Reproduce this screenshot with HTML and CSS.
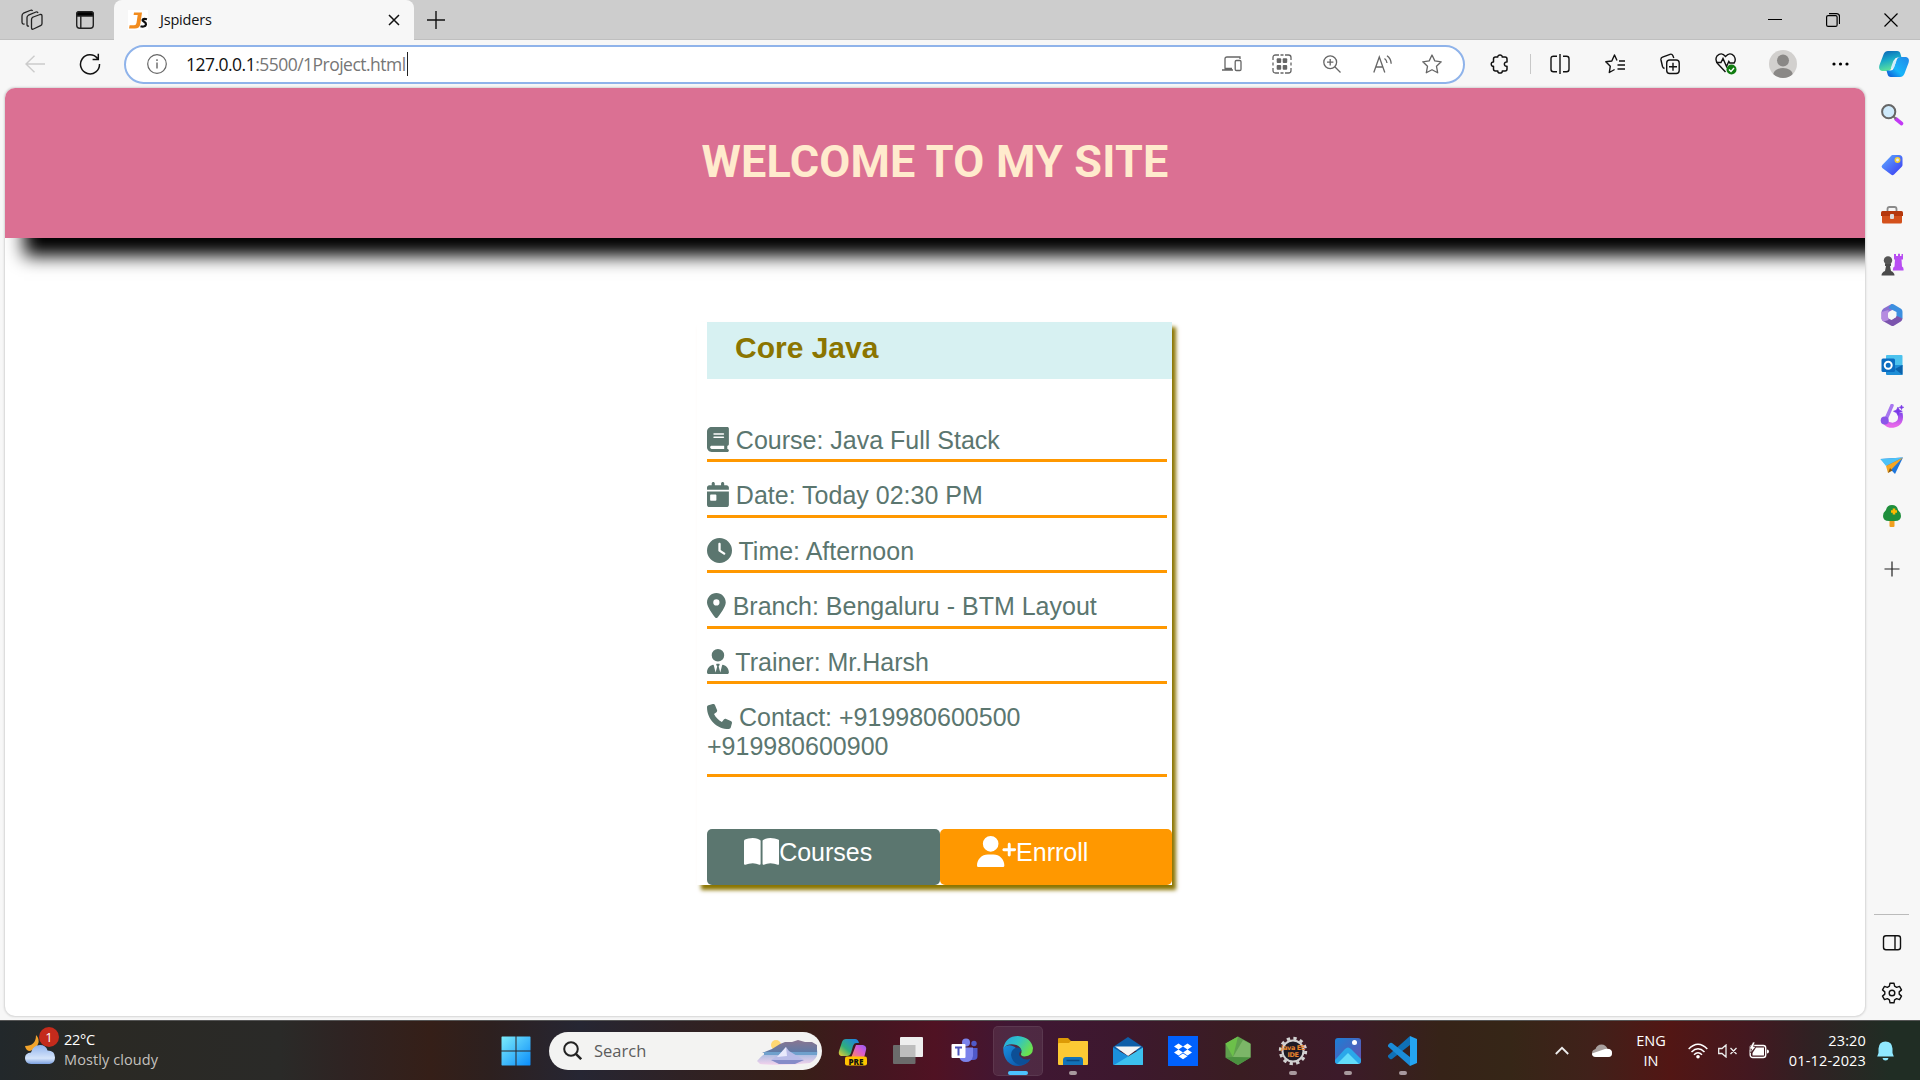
FILE: index.html
```html
<!DOCTYPE html>
<html lang="en">
<head>
<meta charset="utf-8">
<title>Jspiders</title>
<link rel="stylesheet" href="styles.css">
</head>
<body>
<div class="screen">
  <div class="tabbar">
    <div class="tab-tools">
      <svg width="22" height="22" viewBox="0 0 22 22" fill="none" stroke="#222" stroke-width="1.3"><path d="M11 8.500l8-3q2-.5 2 1.500v7.500q0 1.500-1.500 2.200l-7 3.300q-2 .8-2-1.200v-8q0-1.700 1-2.300z"/><path d="M8 17q-2 .5-2-1.500V8.500q0-1.500 1.500-2.300L15 3q1.500-.5 2 1"/><path d="M3.500 15Q1 15.500 1 13V7q0-2 1.500-2.800L9 1.500q2-.8 2.500.5"/></svg>
      <svg width="20" height="20" viewBox="0 0 20 20" fill="none" stroke="#222" stroke-width="1.4"><rect x="1.700" y="1.700" width="16.600" height="16.600" rx="3"/><path d="M1.700 6V4q0-2.300 2.300-2.300h12q2.300 0 2.300 2.300v2z" fill="#000"/><path d="M5.800 6v12"/></svg>
    </div>
    <div class="tab">
      <svg class="favicon" width="20" height="20" viewBox="0 0 20 20"><rect width="20" height="20" fill="#fff"/><path d="M6 2.500h8L12.300 14q-.6 4.500-5.500 4.500H1l.6-3.200h4.500q2 0 2.400-2.300L9.700 5H5.600z" fill="#f28c1e"/><path d="M19 9.200q-4-1-4.500.8c-.3 1.500 4 1.800 3.500 4.500-.5 2.500-4 2.200-5.500 1.700" fill="none" stroke="#111" stroke-width="2.200"/></svg>
      <span class="tab-title">Jspiders</span>
      <svg width="12" height="12" viewBox="0 0 12 12" stroke="#111" stroke-width="1.500"><path d="M1 1l10 10M11 1L1 11"/></svg>
    </div>
    <svg class="newtab" width="18" height="18" viewBox="0 0 18 18" stroke="#111" stroke-width="1.400"><path d="M9 0v18M0 9h18"/></svg>
    <div class="wincontrols">
      <svg width="14" height="14" viewBox="0 0 14 14"><path d="M0 6.500h14" stroke="#000"/></svg>
      <svg width="14" height="14" viewBox="0 0 14 14" fill="none" stroke="#000" stroke-width="1.200"><rect x=".6" y="2.600" width="10.500" height="10.800" rx="1.500"/><path d="M3 .6h7.500q3 0 3 3V11"/></svg>
      <svg width="14" height="14" viewBox="0 0 14 14" stroke="#000" stroke-width="1.200"><path d="M.5 .5l13 13M13.500 .5l-13 13"/></svg>
    </div>
  </div>

  <div class="toolbar">
    <svg width="20" height="18" viewBox="0 0 20 18" fill="none" stroke="#ccc" stroke-width="1.400"><path d="M20 9H1M9.500 .7L1 9l8.500 8.300"/></svg>
    <div class="refresh"><svg width="22" height="22" viewBox="0 0 22 22" fill="none" stroke="#111" stroke-width="1.500"><path d="M20.500 11A9.500 9.500 0 1 1 18.500 5.500M19.300 .8v5.700h-5.700"/></svg></div>
    <div class="address">
      <svg width="20" height="20" viewBox="0 0 20 20" fill="none" stroke="#666" stroke-width="1.200"><circle cx="10" cy="10" r="9.300"/><path d="M10 8.500v6M10 5.300v1.600" stroke-width="1.400"/></svg>
      <span class="url"><b>127.0.0.1</b>:5500/1Project.html</span><span class="caret"></span>
      <div class="address-icons">
        <svg width="20" height="16" viewBox="0 0 20 16" fill="none" stroke="#666" stroke-width="1.300"><path d="M3 12.500V3q0-2 2-2h13v2M0 14h11M2.500 12.500H10"/><rect x="13.200" y="4.500" width="5.800" height="10" rx="1.200"/></svg>
        <svg width="20" height="20" viewBox="0 0 20 20" fill="none" stroke="#666" stroke-width="1.300"><path d="M1 6V3.500Q1 1 3.500 1H7M13 1h3.500Q19 1 19 3.500V6M19 14v2.500q0 2.500-2.500 2.500H13M7 19H3.500Q1 19 1 16.500V14M1 8.500v3M19 8.500v3M8.500 1h3M8.500 19h3"/><g fill="#666" stroke="none"><rect x="4.700" y="4.200" width="4.500" height="4.800" rx="1"/><rect x="10.700" y="4.200" width="4.500" height="4.800" rx="1"/><rect x="4.700" y="10.900" width="4.500" height="4.800" rx="1"/><rect x="10.700" y="10.900" width="4.500" height="4.800" rx="1"/></g></svg>
        <svg width="18" height="18" viewBox="0 0 18 18" fill="none" stroke="#666" stroke-width="1.300"><circle cx="7.200" cy="7.200" r="6.400"/><path d="M11.800 11.800l5.700 5.700M7.200 4v6.400M4 7.200h6.400"/></svg>
        <svg width="20" height="18" viewBox="0 0 20 18" fill="none" stroke="#666" stroke-width="1.300"><path d="M1.800 17.500L7.300 2l5.500 15.500M3.800 12h7M12.500 3.500q2.300 1.700 2.500 4.500M15 .8q4 2.700 4.200 8"/></svg>
        <svg width="20" height="20" viewBox="0 0 20 20" fill="none" stroke="#666" stroke-width="1.300" stroke-linejoin="round"><path d="M10 1l2.800 5.900 6.400.9-4.700 4.500 1.200 6.500L10 15.700l-5.700 3.100 1.200-6.500L.8 7.800l6.400-.9z"/></svg>
      </div>
    </div>
    <div class="puzzle"><svg width="20" height="20" viewBox="0 0 20 20" fill="none" stroke="#111" stroke-width="1.500" stroke-linejoin="round"><path d="M5.500 3h2.300C7.500 .3 12.500 .3 12.200 3H15q2 0 2 2v3c-3.500-.8-3.500 5 0 4.300V15q0 2-2 2h-2.700c.4 2.800-4.900 2.800-4.500 0H5.500q-2 0-2-2v-2.700C.5 12.700 .5 7.500 3.500 8V5q0-2 2-2z"/></svg></div>
    <span class="sep"></span>
    <svg width="20" height="20" viewBox="0 0 20 20" fill="none" stroke="#111" stroke-width="1.400"><path d="M10 0v20M7 2.200H3.500Q1 2.200 1 4.700v10.600q0 2.500 2.500 2.500H7M13 2.200h3.500q2.500 0 2.500 2.500v10.600q0 2.500-2.500 2.500H13"/></svg>
    <svg width="20" height="20" viewBox="0 0 20 20" fill="none" stroke="#111" stroke-width="1.400" stroke-linejoin="round"><path d="M12 6.500L9.500 1 6.800 7 .8 7.800l4.500 4.400-1 6.300 5.300-3M14 7h6M12.500 11h7.500M12.500 15h7.500"/></svg>
    <svg width="20" height="22" viewBox="0 0 20 22" fill="none" stroke="#111" stroke-width="1.400"><rect x="6.700" y="7" width="12.500" height="13.500" rx="3"/><path d="M13 9.700v8M9 13.700h8M4.500 15.500Q3 15 2.500 13.500L1 7Q.6 5 2.500 4.200L10 1.300q2-.6 2.800 1.200l1 2.500"/></svg>
    <svg width="22" height="24" viewBox="0 0 22 24" fill="none" stroke="#111" stroke-width="1.400"><path d="M10.500 20L3 12Q-.5 8 2 4q4.500-4.500 8.500.5Q15-.5 19 4q2.500 4 0 7M1 10.500h5l2-4 3.500 8 2.300-5 1 1.500h5"/><circle cx="16.500" cy="17.500" r="5" fill="#107c10" stroke="none"/><path d="M14 17.500l2 2 3-3.500" stroke="#fff"/></svg>
    <svg width="28" height="28" viewBox="0 0 28 28"><defs><clipPath id="av"><circle cx="14" cy="14" r="14"/></clipPath></defs><g clip-path="url(#av)"><rect width="28" height="28" fill="#d2d0ce"/><circle cx="14" cy="10.500" r="6" fill="#8a8886"/><ellipse cx="14" cy="25" rx="10" ry="7" fill="#8a8886"/></g></svg>
    <svg width="18" height="4" viewBox="0 0 18 4"><circle cx="3" cy="2" r="1.600"/><circle cx="9.500" cy="2" r="1.600"/><circle cx="16" cy="2" r="1.600"/></svg>
    <svg width="30" height="28" viewBox="0 0 30 28"><defs><linearGradient id="cpa" x1="0" y1="0" x2=".3" y2="1"><stop offset="0" stop-color="#0b5fb5"/><stop offset=".5" stop-color="#18a8c9"/><stop offset="1" stop-color="#5de39b"/></linearGradient><linearGradient id="cpb" x1="1" y1="0" x2="0" y2="1"><stop offset="0" stop-color="#2187e8"/><stop offset=".6" stop-color="#18b6fa"/><stop offset="1" stop-color="#0b4fd0"/></linearGradient></defs><path d="M9 1h9q3 0 3.500 3l1 3.500h-4q-2.500 0-3.300 2.500l-2.800 8q-1 3-4 3H3q-4-1-2.500-6L4.700 4Q6 1 9 1z" fill="url(#cpa)"/><path d="M21 27h-9q-3 0-3.500-3l-1-3.500h4q2.500 0 3.300-2.500l2.800-8q1-3 4-3H27q4 1 2.500 6L25.300 24Q24 27 21 27z" fill="url(#cpb)"/><path d="M14.500 10.500L11.800 18h3L17.500 10.500z" fill="#cfeefa"/></svg>
  </div>

  <div class="middle">
    <main class="page">
      <h1 class="banner">WELCOME TO MY SITE</h1>
      <section class="card">
        <h2 class="card-title">Core Java</h2>
        <ul class="details">
          <li class="short"><svg class="fa" viewBox="0 0 448 512"><path d="M96 0C43 0 0 43 0 96V416c0 53 43 96 96 96H384h32c17.700 0 32-14.300 32-32s-14.300-32-32-32V384c17.700 0 32-14.300 32-32V32c0-17.700-14.300-32-32-32H384 96zm0 384H352v64H96c-17.700 0-32-14.300-32-32s14.300-32 32-32zm32-240c0-8.800 7.200-16 16-16H336c8.800 0 16 7.200 16 16s-7.200 16-16 16H144c-8.800 0-16-7.200-16-16zm16 48H336c8.800 0 16 7.200 16 16s-7.200 16-16 16H144c-8.800 0-16-7.200-16-16s7.200-16 16-16z"/></svg> Course: Java Full Stack</li>
          <li><svg class="fa" viewBox="0 0 448 512"><path d="M128 0c17.700 0 32 14.300 32 32V64H288V32c0-17.700 14.300-32 32-32s32 14.300 32 32V64h48c26.500 0 48 21.500 48 48v48H0V112C0 85.500 21.500 64 48 64H96V32c0-17.700 14.300-32 32-32zM0 192H448V464c0 26.500-21.500 48-48 48H48c-26.500 0-48-21.500-48-48V192zm80 64c-8.800 0-16 7.200-16 16v96c0 8.800 7.200 16 16 16h96c8.800 0 16-7.200 16-16V272c0-8.800-7.200-16-16-16H80z"/></svg> Date: Today 02:30 PM</li>
          <li class="short"><svg class="fa" viewBox="0 0 512 512"><path d="M256 0a256 256 0 1 1 0 512A256 256 0 1 1 256 0zM232 120V256c0 8 4 15.500 10.700 20l96 64c11 7.400 25.900 4.400 33.300-6.700s4.400-25.900-6.700-33.300L280 243.200V120c0-13.300-10.700-24-24-24s-24 10.700-24 24z"/></svg> Time: Afternoon</li>
          <li><svg class="fa" viewBox="0 0 384 512"><path d="M215.700 499.200C267 435 384 279.400 384 192C384 86 298 0 192 0S0 86 0 192c0 87.400 117 243 168.300 307.200c12.300 15.300 35.100 15.300 47.400 0zM192 128a64 64 0 1 1 0 128 64 64 0 1 1 0-128z"/></svg> Branch: Bengaluru - BTM Layout</li>
          <li class="short"><svg class="fa" viewBox="0 0 448 512"><path d="M96 128a128 128 0 1 0 256 0A128 128 0 1 0 96 128zm94.500 200.200l18.600 31L175.800 483.100l-36-146.900c-2-8.100-9.800-13.400-17.900-11.300C51.900 342.400 0 405.800 0 481.300c0 17 13.800 30.700 30.700 30.700H162.500c0 0 0 0 .1 0H168 280h5.500c0 0 0 0 .1 0H417.300c17 0 30.700-13.800 30.700-30.700c0-75.500-51.900-138.900-121.900-156.400c-8.100-2-15.900 3.300-17.900 11.300l-36 146.900L238.900 359.200l18.600-31c6.400-10.700-1.300-24.200-13.700-24.200H224 204.300c-12.400 0-20.100 13.600-13.700 24.200z"/></svg> Trainer: Mr.Harsh</li>
          <li class="tall"><svg class="fa" viewBox="0 0 512 512"><path d="M164.900 24.600c-7.700-18.600-28-28.500-47.400-23.200l-88 24C12.100 30.200 0 46 0 64C0 311.400 200.600 512 448 512c18 0 33.800-12.100 38.600-29.500l24-88c5.300-19.400-4.600-39.700-23.200-47.400l-96-40c-16.300-6.800-35.200-2.100-46.300 11.600L304.700 368C234.300 334.700 177.300 277.700 144 207.300L193.300 167c13.700-11.200 18.400-30 11.600-46.300l-40-96z"/></svg> Contact: +919980600500<br>+919980600900</li>
        </ul>
        <div class="actions">
          <a class="btn courses"><svg class="fa big" viewBox="0 0 576 512"><path d="M249.600 471.500c10.800 3.800 22.400-4.100 22.400-15.500V78.600c0-4.200-1.600-8.400-5-11C247.400 52 202.400 32 144 32C93.500 32 46.300 45.300 18.100 56.100C6.800 60.500 0 71.700 0 83.800V454.100c0 11.900 12.800 20.200 24.100 16.500C55.600 460.100 105.500 448 144 448c33.900 0 79 14 105.600 23.500zm76.800 0C353 462 398.100 448 432 448c38.500 0 88.400 12.100 119.900 22.600c11.300 3.800 24.100-4.600 24.100-16.500V83.800c0-12.100-6.800-23.300-18.100-27.600C529.700 45.300 482.500 32 432 32c-58.400 0-103.400 20-123 35.600c-3.300 2.600-5 6.800-5 11V456c0 11.400 11.700 19.300 22.400 15.500z"/></svg>Courses</a>
          <a class="btn enroll"><svg class="fa big" viewBox="0 0 640 512"><path d="M96 128a128 128 0 1 1 256 0A128 128 0 1 1 96 128zM0 482.300C0 383.800 79.800 304 178.300 304h91.400C368.200 304 448 383.800 448 482.300c0 16.400-13.300 29.700-29.700 29.700H29.700C13.300 512 0 498.700 0 482.300zM504 312V248H440c-13.300 0-24-10.700-24-24s10.700-24 24-24h64V136c0-13.300 10.700-24 24-24s24 10.700 24 24v64h64c13.300 0 24 10.700 24 24s-10.700 24-24 24H552v64c0 13.300-10.700 24-24 24s-24-10.700-24-24z"/></svg>Enrroll</a>
        </div>
      </section>
    </main>

    <aside class="sidebar">
      <svg viewBox="0 0 24 24"><path d="M16 16l5.500 4.500" stroke="#c239f5" stroke-width="3.600" stroke-linecap="round"/><path d="M13.500 13.500l2.500 2.300" stroke="#777" stroke-width="2"/><circle cx="8.700" cy="8.700" r="6.600" fill="#cfeafb" stroke="#666" stroke-width="2"/></svg>
      <svg viewBox="0 0 24 24"><defs><linearGradient id="tg" x1="0" y1="0" x2="1" y2="1"><stop offset="0" stop-color="#5fb0ff"/><stop offset="1" stop-color="#3a35f2"/></linearGradient></defs><path d="M12.500 2H19q3.500 0 3.500 3.500V12q0 1-1 2l-7.500 7.500q-1.500 1.500-3 0L2.300 15q-1.500-1.500 0-3L11 3q.7-1 1.500-1z" fill="url(#tg)"/><circle cx="17.500" cy="7" r="2.200" fill="#dfe8ff" stroke="#f5cf2e" stroke-width="1.500"/></svg>
      <svg viewBox="0 0 24 24"><path d="M7.500 8V6q0-2 2-2h5q2 0 2 2v2" fill="none" stroke="#8a8a8a" stroke-width="1.800"/><rect x="2" y="10" width="20" height="10.500" rx="1.500" fill="#d4511c"/><path d="M2.500 8h19q1.500 0 1.500 1.500V13H1V9.500Q1 8 2.500 8z" fill="#b5380d"/><rect x="10" y="11" width="4" height="5" rx="1" fill="#ddd"/></svg>
      <svg viewBox="0 0 24 24"><path d="M14 1h2v2h2V.7h2V3h1.500V1H23v5.500h-1.500l.5 7q2 1 1.500 4H13q-.5-3 1.500-4l.5-7h-1z" fill="#b84df2"/><circle cx="8" cy="7.500" r="4.200" fill="#555"/><path d="M5 11h6v2h-1l1 5q3.500 1.500 3.500 4.500h-13Q1.500 19.500 5 18l1-5H5z" fill="#4a4a4a"/></svg>
      <svg viewBox="0 0 24 24"><path d="M11.500 1L3.500 5.500Q1.500 7 1.500 9v7l6 1V9.500L14 6z" fill="#8a6fd0"/><path d="M11.500 1q1-.3 2 .2l7.500 4.500q1.500 1 1.500 3v7l-6-2V9L8.500 5z" fill="#3c8fe0"/><path d="M1.800 16q.5 1.500 2 2.500l7.500 4.300q1.500.5 2.500 0l7-4.300q1.500-1 1.700-3L17 13l-5.500 4L7.500 15z" fill="#7b54ad"/><path d="M1.500 9v7q.5 2 2.300 2.500L8.500 17V7z" fill="#b58be0"/><path d="M12 8l4 2.300v4L12 16.500l-4-2.300v-4z" fill="#f7f7f7"/></svg>
      <svg viewBox="0 0 24 24"><rect x="6" y="2" width="16.500" height="12" rx="1" fill="#4cc2ee"/><path d="M6 12h16.500v9q0 1-1 1H7q-1 0-1-1z" fill="#1f8ed6"/><path d="M22.500 12L15 16l7.500 6z" fill="#0a62ab"/><rect x="1.500" y="5.500" width="13.500" height="13.500" rx="1.500" fill="#0b6cc0"/><circle cx="8.200" cy="12.200" r="3.500" fill="none" stroke="#fff" stroke-width="2"/></svg>
      <svg viewBox="0 0 24 24"><defs><linearGradient id="pt" x1="0" y1="0" x2="0" y2="1"><stop offset="0" stop-color="#8347ec"/><stop offset="1" stop-color="#e667ea"/></linearGradient></defs><path d="M20 9Q22.500 20 13 21.300 8 21.500 5 18" fill="none" stroke="url(#pt)" stroke-width="5"/><path d="M12 1.500L6.500 14" stroke="#a877f0" stroke-width="3.500" stroke-linecap="round"/><circle cx="4.700" cy="16.500" r="4" fill="#8a55e8"/><path d="M18 3l1.300 3 3 1.300-3 1.400L18 11.500l-1.500-2.800-3-1.400 3-1.300zM21.500 1l.6 1.700 1.700.6-1.700.7-.6 1.600-.7-1.600-1.600-.7 1.600-.6z" fill="#7a39e8" stroke="#7a39e8" stroke-width=".6"/></svg>
      <svg viewBox="0 0 24 24"><path d="M.5 5L23 3.500 15 20z" fill="#1e76dc"/><path d="M.5 5L23 3.500 6 12z" fill="#4ec2f7"/><path d="M23 3.500L6 12l2 7z" fill="#f5a623"/><path d="M8 19l2-5 2.500 2.500z" fill="#8a5a10"/></svg>
      <svg viewBox="0 0 24 24"><rect x="9.500" y="15" width="5" height="8" rx="1" fill="#f0a020"/><path d="M12 1q5 0 6 5 3 2.500 3 6 0 5-6 5H9q-6 0-6-5 0-3.500 3-6 1-5 6-5z" fill="#1f8f3c"/><path d="M14 4.500v6M11 7.500h6" stroke="#ffb900" stroke-width="2.600"/></svg>
      <svg class="plus" viewBox="0 0 24 24" stroke="#222" stroke-width="1.200"><path d="M12 4.500v15M4.500 12h15"/></svg>
      <div class="sidebar-bottom">
        <svg viewBox="0 0 24 24" fill="none" stroke="#111" stroke-width="1.400"><rect x="3.500" y="4.800" width="17" height="14" rx="2.500"/><path d="M15 4.800v14"/></svg>
        <svg viewBox="0 0 24 24" fill="none" stroke="#111" stroke-width="1.400" stroke-linejoin="round"><circle cx="12" cy="12" r="2.800"/><path d="M10 2.200h4l.6 3 2 1.200 2.900-1 2 3.500-2.300 2v2.200l2.300 2-2 3.500-2.900-1-2 1.200-.6 3h-4l-.6-3-2-1.200-2.900 1-2-3.500 2.300-2v-2.200l-2.300-2 2-3.500 2.900 1 2-1.200z"/></svg>
      </div>
    </aside>
  </div>

  <footer class="taskbar">
    <div class="weather">
      <div class="weather-icon">
        <svg width="32" height="32" viewBox="0 0 32 32"><defs><linearGradient id="cl" x1="0" y1="0" x2="0" y2="1"><stop offset="0" stop-color="#8fb2ec"/><stop offset=".7" stop-color="#d5e4fa"/><stop offset="1" stop-color="#7ba0e0"/></linearGradient></defs><path d="M12 1q4 4 2 9t-8 7q-4 0-5-5 11 0 11-11z" fill="#f2a42c"/><path d="M7 30q-6-.5-6-6 0-5 6-5.500Q9 11 16 11q6 0 7.500 5.500 7.500 0 7.500 7Q31 29 25.500 30z" fill="url(#cl)"/></svg>
        <span class="badge">1</span>
      </div>
      <div class="weather-text"><span>22°C</span><span class="dim">Mostly cloudy</span></div>
    </div>
    <svg class="start" width="30" height="30" viewBox="0 0 30 30"><defs><linearGradient id="wn" x1="0" y1="0" x2="1" y2="1"><stop offset="0" stop-color="#7cecfb"/><stop offset="1" stop-color="#0a8cfa"/></linearGradient></defs><path d="M1 .5h13.500v14H.5V1zM15.500 .5H29l.5.5v13.500h-14zM.5 15.500h14v14H1l-.5-.5zM15.500 15.500h14V29l-.5.5H15.500z" fill="url(#wn)"/></svg>
    <div class="search">
      <svg width="19" height="19" viewBox="0 0 19 19" fill="none" stroke="#222" stroke-width="2"><circle cx="8" cy="8" r="6.800"/><path d="M12.800 12.800l5.400 5.400" stroke-width="2.500"/></svg>
      <span>Search</span>
      <svg class="scene" width="62" height="28" viewBox="0 0 62 28"><defs><linearGradient id="lk" x1="0" y1="0" x2="0" y2="1"><stop offset="0" stop-color="#8db4dd"/><stop offset="1" stop-color="#f3d2ec"/></linearGradient><linearGradient id="mt" x1="0" y1="0" x2="0" y2="1"><stop offset="0" stop-color="#8a7590"/><stop offset="1" stop-color="#5b7ba8"/></linearGradient></defs><path d="M0 24Q6 17 14 13h46q2 8-7 13-22 3-50 1z" fill="url(#lk)"/><circle cx="19" cy="8" r="5" fill="#ffd873"/><path d="M5 16l10-4 8-5 5-2 7 0 6-2 7 2 7 0 5 3v8z" fill="url(#mt)"/><path d="M7 15h53v3H7z" fill="#6fa0cc"/><path d="M14 23l9-6 6-7 3 4 5 3 10 6-12 4H23z" fill="#b9bce8"/><path d="M20 20l9-10 1 9z" fill="#e9eafc"/><path d="M14 23h33l-9 4H22z" fill="#858bc8"/></svg>
    </div>
    <div class="apps">
      <div class="app"><svg viewBox="0 0 30 30"><defs><linearGradient id="p1" x1="0" y1="1" x2="1" y2="0"><stop offset="0" stop-color="#f4ce2f"/><stop offset=".4" stop-color="#2fae7b"/><stop offset="1" stop-color="#1d7cf0"/></linearGradient><linearGradient id="p2" x1="0" y1="1" x2="1" y2="0"><stop offset="0" stop-color="#ff8a55"/><stop offset=".6" stop-color="#d95bd2"/><stop offset="1" stop-color="#8d5cf5"/></linearGradient></defs><path d="M8 3h9q3 0 4 4h-3q-2 0-3 3l-2 7q-1 3-4 3H3q-3-1-2-5L4 6q1-3 4-3z" fill="url(#p1)"/><path d="M18 9h7q4 1 3 5l-2 8H13z" fill="url(#p2)"/><rect x="7" y="20.500" width="22" height="9" rx="2" fill="#ffc400"/></svg><span class="pre">PRE</span></div>
      <div class="app"><svg viewBox="0 0 30 30"><rect y="9" width="22.500" height="19" rx="1" fill="#6b6b6b"/><rect x="7" y="1" width="23" height="20" rx="1" fill="#eee"/><path d="M7 9h15.500v12H7z" fill="#bdbdbd"/></svg></div>
      <div class="app"><svg viewBox="0 0 30 30"><circle cx="18" cy="6.500" r="4" fill="#7b83eb"/><circle cx="26" cy="7.500" r="2.700" fill="#5059c9"/><path d="M20 12h9.500v8q0 4-4 4H20z" fill="#5059c9"/><path d="M11 11.500h14V20q-1 6-7 6t-7-6z" fill="#7b83eb"/><rect x="3.500" y="8" width="14" height="14" rx="1" fill="#fff"/><path d="M7 11.500h7M10.500 11.500v8" stroke="#4b53bc" stroke-width="2"/></svg></div>
      <div class="app active"><svg viewBox="0 0 30 30"><defs><linearGradient id="e1" x1="0" y1="0" x2="1" y2=".5"><stop offset="0" stop-color="#27a3e2"/><stop offset=".5" stop-color="#2fc3c8"/><stop offset="1" stop-color="#6be04e"/></linearGradient><linearGradient id="e2" x1="0" y1="0" x2="1" y2="1"><stop offset="0" stop-color="#1a8fe0"/><stop offset="1" stop-color="#0a4a9c"/></linearGradient></defs><path d="M.3 12Q0 20 4.500 25.500 9 30 15 30q8 0 12.500-7-6 2.500-10 0-2.500-2-2.500-5 0-4-3-7Q5 7 .3 12z" fill="url(#e2)"/><path d="M.3 12.500Q2.500 0 15 0q13 1 15 12 0 8-8.500 8.500-5-.5-3-4 .5-5-5-7.500Q4.500 6.500 .3 12.500z" fill="url(#e1)"/><path d="M8 19q0-6 6-7.500 3.500 0 4.500 3-4 2.500-1.500 6 4.500 4.500 10.500 2.500Q23 30 15 28.500 9 26 8 19z" fill="#0c4f96"/></svg></div>
      <div class="app open"><svg viewBox="0 0 30 30"><path d="M0 3q0-1 1-1h9l3 3h16q1 0 1 1v4H0z" fill="#dc9a06"/><path d="M0 8q0-1 1-1h10l2-2h16q1 0 1 1v22q0 1-1 1H1q-1 0-1-1z" fill="#fcc934"/><path d="M5 29v-5q0-3 3-3h14q3 0 3 3v5z" fill="#1272b8"/><path d="M8.500 24.500h13" stroke="#0a4a82" stroke-width="1.500"/></svg></div>
      <div class="app"><svg viewBox="0 0 30 30"><path d="M0 11L15 1l15 10v4H0z" fill="#0e5ea8"/><path d="M2 10.500h26L15 20z" fill="#f4f4f4"/><path d="M0 11.500L15 20v9H1q-1 0-1-1z" fill="#1b8fdc"/><path d="M30 11.500v17q0 .5-1 .5H1z" fill="#3cc0ee"/></svg></div>
      <div class="app"><svg viewBox="0 0 30 30"><rect width="30" height="30" fill="#0061fe"/><path d="M10.500 7.500l4.500 3-4.500 3-4.500-3zM19.500 7.500l4.500 3-4.500 3-4.500-3zM10.500 13.500l4.500 3-4.500 3-4.500-3zM19.500 13.500l4.500 3-4.500 3-4.500-3zM15 17.500l4.500 2.700-4.500 3-4.500-3z" fill="#fff"/></svg></div>
      <div class="app"><svg viewBox="0 0 30 30"><path d="M15 .5l12.500 7v14L15 29 2.500 21.500v-14z" fill="#5fa04e"/><path d="M15 .5l-12.500 7L10 21z" fill="#6cc04a"/><path d="M20 4l7.500 4v13.500L10 21z" fill="#7cb668"/><path d="M2.500 21.500L10 21l5 8zM27.500 21.500L10 21l5 8z" fill="#4b9140"/></svg></div>
      <div class="app open"><svg viewBox="0 0 30 30"><circle cx="15" cy="15" r="12.700" fill="none" stroke="#d2d2d2" stroke-width="3" stroke-dasharray="3.300 3.350"/><circle cx="15" cy="15" r="10.500" fill="#1d1a24" stroke="#d2d2d2" stroke-width="2"/></svg><span class="jee">Java EE<br>IDE</span></div>
      <div class="app open"><svg viewBox="0 0 30 30"><defs><linearGradient id="ph" x1="0" y1="0" x2="1" y2="1"><stop offset="0" stop-color="#1b7fd6"/><stop offset="1" stop-color="#6a4fae"/></linearGradient></defs><rect x="2" y="2" width="26" height="26" rx="3" fill="url(#ph)"/><path d="M2 24l10-11q3-3 6 0l10 10v2q0 3-3 3H5q-3 0-3-3z" fill="#2aa8ea"/><path d="M4 28L15 17l11 11z" fill="#62dcfa"/><circle cx="21.500" cy="6.500" r="2.500" fill="#fff"/></svg></div>
      <div class="app open"><svg viewBox="0 0 30 30"><path d="M22 0l7 3v24l-7 3z" fill="#24a5f2"/><path d="M22 0v9L4 23q-1 .5-2 0l-2-2q-.5-1 0-1.500z" fill="#0f70b7"/><path d="M22 30v-9L4 7Q3 6.500 2 7L0 9q-.5 1 0 1.500z" fill="#1b8cd8"/></svg></div>
    </div>
    <div class="tray">
      <svg class="t-chev" width="14" height="9" viewBox="0 0 14 9" fill="none" stroke="#eee" stroke-width="1.800"><path d="M.8 8L7 1.800 13.200 8"/></svg>
      <svg class="t-cloud" width="20" height="14" viewBox="0 0 20 14"><path d="M4 13q-4-.5-4-4 0-3 3.500-4Q5 .5 9.500 .5q4.500 0 6 4.500Q20 5.500 20 9.500q0 3.500-4 3.500z" fill="#a8a09e"/><path d="M4 13q-4 0-4-3.500L13 5q7-1 7 4 0 4-4 4z" fill="#fff"/></svg>
      <div class="lang"><span>ENG</span><span>IN</span></div>
      <svg class="t-wifi" width="20" height="16" viewBox="0 0 20 16" fill="none" stroke="#fff" stroke-width="1.500"><path d="M.7 6Q10-3.500 19.300 6M3.500 9Q10 2.500 16.500 9M6 11.700q4-3.800 8 0"/><circle cx="10" cy="13.700" r="1.800" fill="#fff" stroke="none"/></svg>
      <svg class="t-vol" width="20" height="14" viewBox="0 0 20 14" fill="none" stroke="#eee" stroke-width="1.300"><path d="M8 1v12L4 9.500H.7v-5H4zM12.500 4l6 6M18.500 4l-6 6"/></svg>
      <svg class="t-bat" width="20" height="17" viewBox="0 0 20 17"><rect x="1.200" y="3.500" width="15.500" height="12" rx="2.500" fill="none" stroke="#fff" stroke-width="1.400"/><path d="M7 5.500h8v8H3.500V11z" fill="#fff"/><path d="M18 7.500q2 0 2 2t-2 2z" fill="#fff"/><path d="M4 0L0 7h2.500L1.500 11 7 4.500H4.500L6 0z" fill="#fff" stroke="#40191f" stroke-width=".6"/></svg>
      <div class="clock"><span>23:20</span><span>01-12-2023</span></div>
      <svg class="t-bell" width="17" height="20" viewBox="0 0 17 20" fill="#8fe8ff"><path d="M8.500 .5q6.500 0 7 7V12l1.300 3.500H.2L1.500 12V7.500q.5-7 7-7zM5.500 17h6q-.5 2.500-3 2.500t-3-2.500z"/></svg>
    </div>
  </footer>
</div>
</body>
</html>
```
FILE: styles.css
```css
* { box-sizing: border-box; }
body { margin: 0; font-family: "Open Sans", "Noto Sans", sans-serif; color: #111; }
svg { display: block; flex: none; }
.screen { width: 1920px; height: 1080px; display: flex; flex-direction: column; overflow: hidden; background: #f7f7f7; }

/* tab strip */
.tabbar { height: 40px; flex: none; display: flex; background: #cdcdcd; border-bottom: 1px solid #bfbfbf; }
.tab-tools { width: 114px; display: flex; align-items: center; gap: 32px; padding-left: 21px; }
.tab { width: 300px; height: 40px; display: flex; align-items: center; padding: 0 14px 0 14px; background: #f7f7f7; border-radius: 8px 8px 0 0; }
.tab-title { flex: 1; padding-left: 12px; font-size: 14.500px; line-height: 20px; letter-spacing: -0.2px; }
.newtab { margin: 11px 0 0 13px; }
.wincontrols { margin-left: auto; display: flex; gap: 44px; padding: 13px 22px 0 0; }

/* toolbar */
.toolbar { height: 48px; flex: none; display: grid; align-items: center; justify-items: center;
  grid-template-columns: 70px 54px 1341px 64px 2px 57px 54px 56px 55px 60px 54px 53px; }
.refresh { padding-right: 14px; }
.puzzle { padding-left: 5px; }
.sep { width: 1px; height: 20px; background: #c8c8c8; }
.address { width: 1341px; height: 39px; display: flex; align-items: center; padding: 0 6px 0 21px; background: #fff; border: 2px solid #8fb3ea; border-radius: 20px; }
.url { padding-left: 19px; font-size: 17.500px; line-height: 24px; letter-spacing: -0.520px; color: #767676; white-space: nowrap; }
.url b { font-weight: 400; color: #111; }
.caret { width: 1px; height: 24px; margin-left: 1px; background: #222; }
.address-icons { margin-left: auto; display: grid; grid-template-columns: repeat(5, 50px); justify-items: center; align-items: center; }

/* viewport and sidebar */
.middle { height: 932px; flex: none; display: flex; padding-left: 5px; }
.page { width: 1860px; height: 928px; overflow: hidden; background: #fff; border-radius: 10px; box-shadow: 0 0 2px 1px #d4d4d4; display: flex; flex-direction: column; align-items: center; }
.banner { width: 100%; height: 150px; flex: none; margin: 0; background: #db7093; color: blanchedalmond; box-shadow: 19px 18px 17px #000; text-align: center; font: bold 45px/148px Roboto, sans-serif; letter-spacing: 0.200px; }
.card { width: 475px; height: 563px; flex: none; margin: 84px 1px 0 0; padding-left: 10px; background: #fff; box-shadow: 4px 5px 4px #8b7500; font: 25px/29px "Liberation Sans", Arial, sans-serif; }
.card-title { height: 57px; margin: 0; padding-left: 28px; background: #d7f1f2; color: #8b7500; font-size: 30px; line-height: 52px; }
.details { width: 460px; margin: 28px 0 0; padding: 0; list-style: none; color: #5b766f; }
.details li { height: 56px; padding-top: 19px; border-bottom: 3px solid #ff9800; }
.details .short { height: 55px; }
.details .tall { height: 93px; }
.fa { display: inline; height: 25px; fill: currentColor; vertical-align: -3px; }
.fa.big { height: 31.25px; vertical-align: -6px; }
.actions { display: flex; margin-top: 52px; }
.btn { width: 233px; height: 56px; padding: 7px 0 0 37px; border-radius: 5px; color: #fff; }
.courses { background: #5b766f; }
.enroll { width: 232px; background: #ff9800; }

.sidebar { flex: 1; display: flex; flex-direction: column; align-items: center; padding: 15px 2px 0 0; gap: 26.100px; }
.sidebar svg { width: 24px; height: 24px; }
.sidebar .plus { margin-top: 3px; }
.sidebar-bottom { width: 35px; margin-top: auto; height: 106px; flex: none; border-top: 1px solid #bbb; display: flex; flex-direction: column; align-items: center; gap: 26px; padding-top: 16px; }

/* taskbar */
.taskbar { height: 60px; flex: none; display: flex; align-items: center; border-top: 1px solid #555; color: #fff; font-size: 15px;
  background: linear-gradient(90deg, #22282b 0, #2a2924 100px, #2a2a28 280px, #2f2322 350px, #351f18 430px, #2d201f 490px, #262633 580px, #2f2225 680px, #381f18 800px, #431620 870px, #501223 935px, #401734 1010px, #3d182e 1120px, #3a1d22 1240px, #3c1a2a 1340px, #362318 1440px, #362617 1510px, #40211a 1590px, #521614 1670px, #431820 1750px, #302123 1810px, #202d24 1890px); }
.weather { width: 488px; height: 59px; display: flex; padding-left: 24px; }
.weather-icon { position: relative; width: 32px; height: 32px; margin-top: 13px; }
.badge { position: absolute; left: 15px; top: -7px; width: 20px; height: 20px; border-radius: 50%; background: #c42b1c; font-size: 13px; line-height: 20px; text-align: center; }
.weather-text { display: flex; flex-direction: column; padding: 9px 0 0 8px; line-height: 20px; font-size: 14.500px; letter-spacing: -0.3px; }
.dim { color: #c4c1bf; letter-spacing: 0.100px; }
.start { margin: 0 18px 0 13px; }
.search { width: 273px; height: 38px; display: flex; align-items: center; padding: 0 3px 0 14px; background: #f3f3f2; border-radius: 19px; color: #5c5c5c; font-size: 16.500px; }
.search span { padding-left: 12px; }
.scene { margin-left: auto; }
.apps { display: flex; padding-left: 6px; }
.app { position: relative; width: 50px; height: 50px; margin-right: 5px; padding: 10px; border-radius: 5px; }
.app svg { width: 30px; height: 30px; }
.active { background: rgba(255, 255, 255, .08); box-shadow: inset 0 0 0 1px rgba(255, 255, 255, .07); }
.active::after, .open::after { content: ""; position: absolute; left: 21px; bottom: 1px; width: 8px; height: 4px; border-radius: 2px; background: #a8999e; }
.active::after { left: 15px; width: 20px; background: #4cc2ff; }
.pre { position: absolute; left: 18px; top: 31px; width: 20px; text-align: center; color: #111; font-weight: 800; font-size: 8px; line-height: 9px; }
.jee { position: absolute; left: 8px; top: 19px; width: 34px; text-align: center; color: #e8842c; font: bold 6.500px/7px "DejaVu Sans", sans-serif; letter-spacing: -0.4px; }
.tray { flex: 1; display: flex; align-items: center; justify-content: flex-end; padding-right: 26px; line-height: 20px; font-size: 14.500px; }
.tray span { display: block; }
.t-cloud { margin-left: 23px; }
.lang { width: 30px; margin-left: 24px; text-align: center; }
.t-wifi { margin-left: 22px; }
.t-vol { margin-left: 10px; }
.t-bat { margin-left: 11px; }
.clock { width: 97px; text-align: right; white-space: nowrap; letter-spacing: 0.150px; }
.t-bell { margin-left: 11px; }
```
